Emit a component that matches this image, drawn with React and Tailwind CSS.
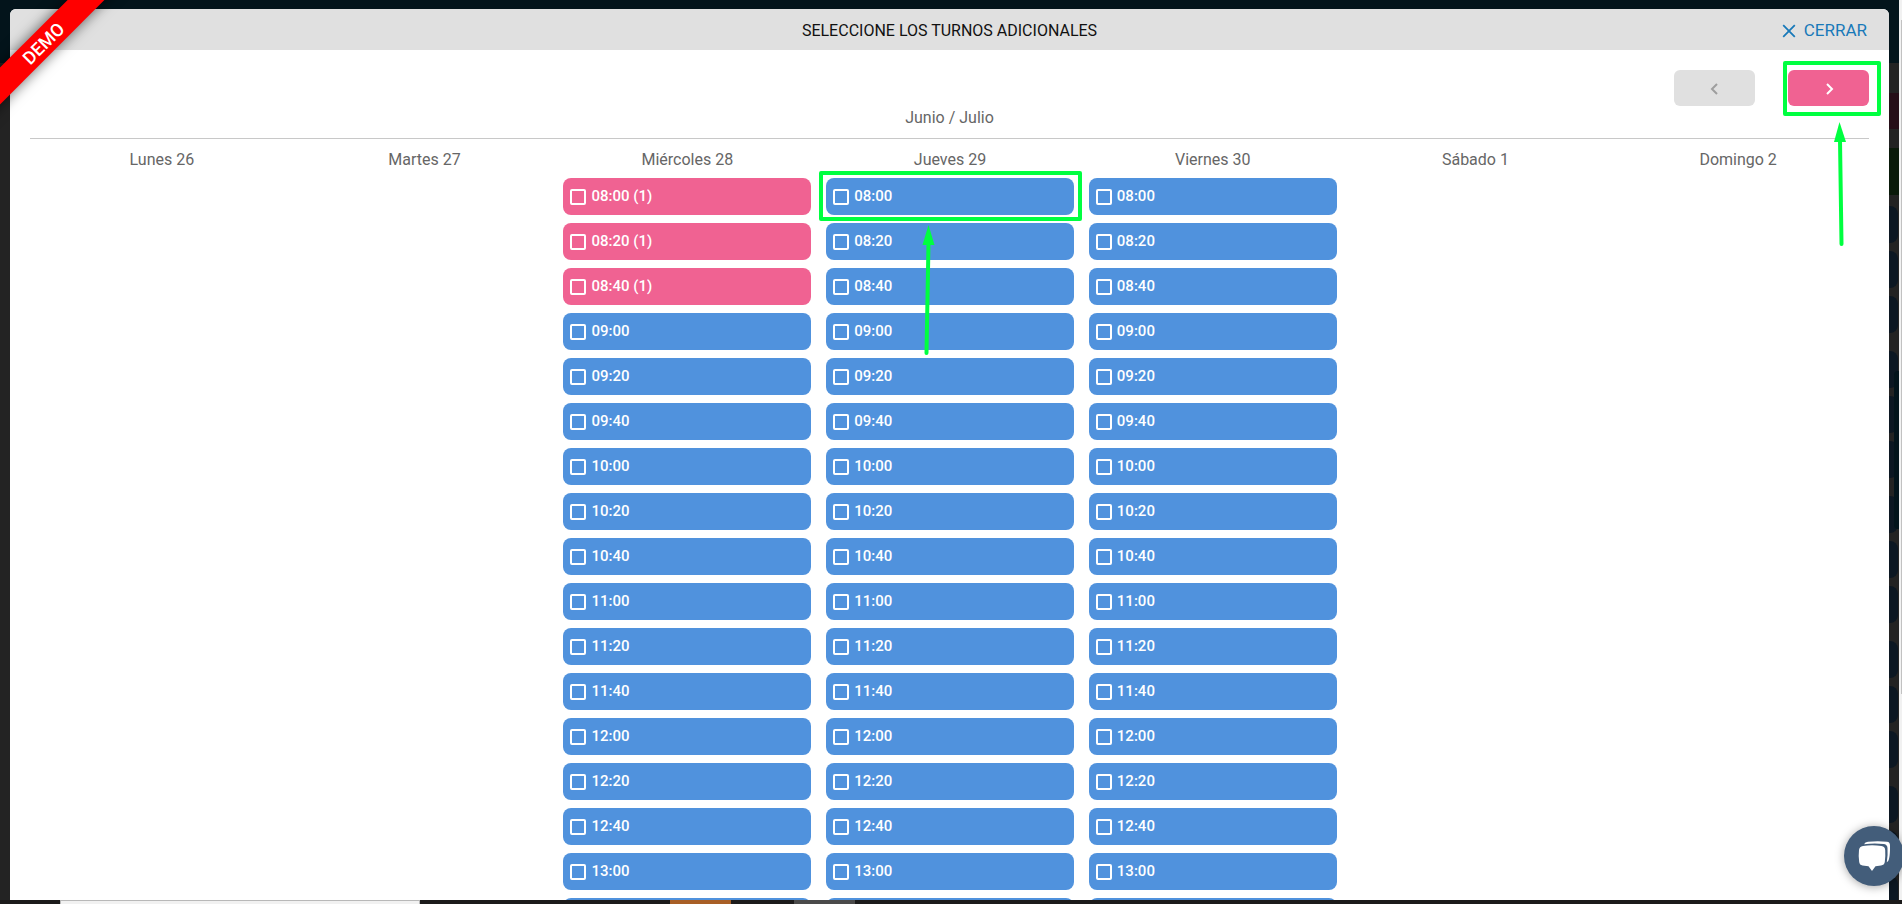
import React, { useState } from "react";

const TIMES = [
  "08:00", "08:20", "08:40", "09:00", "09:20", "09:40", "10:00", "10:20", "10:40",
  "11:00", "11:20", "11:40", "12:00", "12:20", "12:40", "13:00", "13:20",
];

const DAYS = [
  { id: "lun", label: "Lunes 26", slots: [] },
  { id: "mar", label: "Martes 27", slots: [] },
  { id: "mie", label: "Miércoles 28", slots: TIMES, booked: { "08:00": 1, "08:20": 1, "08:40": 1 } },
  { id: "jue", label: "Jueves 29", slots: TIMES, marked: "08:00" },
  { id: "vie", label: "Viernes 30", slots: TIMES },
  { id: "sab", label: "Sábado 1", slots: [] },
  { id: "dom", label: "Domingo 2", slots: [] },
];

export default function App() {
  const [selected, setSelected] = useState({});

  const toggle = (key) => setSelected((s) => ({ ...s, [key]: !s[key] }));

  return (
    <div className="relative flex h-screen flex-col overflow-hidden bg-[#232323] font-[Roboto,sans-serif]">
      <div className="relative flex min-h-0 flex-1 pt-[9px] pr-[13px] pl-[10px]">
        <Backdrop />
        <div
          role="dialog"
          aria-labelledby="dialog-title"
          className="relative flex min-w-0 flex-1 flex-col overflow-hidden rounded-t-md bg-white"
        >
          <header className="grid h-[41px] shrink-0 grid-cols-[1fr_auto_1fr] items-center bg-[#e0e0e0] px-[22px] pt-[2px]">
            <h1 id="dialog-title" className="col-start-2 text-base text-[#111]">
              SELECCIONE LOS TURNOS ADICIONALES
            </h1>
            <button type="button" className="flex items-center gap-2 justify-self-end text-[17px] text-[#1879b9]">
              <svg viewBox="0 0 14 14" className="size-[14px]" fill="none" stroke="currentColor" strokeWidth="1.8">
                <path d="M1.2 1.2l11.6 11.6M12.8 1.2L1.2 12.8" />
              </svg>
              CERRAR
            </button>
          </header>

          <div className="flex min-h-0 flex-1 flex-col px-5 pt-5">
            <div className="flex shrink-0 justify-end gap-[33px]">
              <button
                type="button"
                disabled
                aria-label="Semana anterior"
                className="flex h-9 w-[81px] items-center justify-center rounded-md bg-[#e0e0e0] text-[#9e9e9e]"
              >
                <Chevron d="M8 1L3 6l5 5" />
              </button>
              <div className="relative">
                <button
                  type="button"
                  aria-label="Semana siguiente"
                  className="flex h-9 w-[81px] items-center justify-center rounded-md bg-[#f06292] text-white"
                >
                  <Chevron d="M4 1l5 5-5 5" />
                </button>
                <div className="pointer-events-none absolute -top-[9px] -right-[12px] -bottom-[10px] -left-[5px] z-10 rounded-xs border-4 border-[#00ff40]" />
                <svg
                  className="pointer-events-none absolute top-[52px] left-[46px] z-10 h-[126px] w-[14px]"
                  viewBox="0 0 14 126"
                >
                  <path d="M6 18L7.500 122" stroke="#00ff40" strokeWidth="4" strokeLinecap="round" />
                  <path d="M5.500 0L12 20H0z" fill="#00ff40" />
                </svg>
              </div>
            </div>

            <h2 className="shrink-0 border-b border-[#c8c8c8] pb-2 text-center text-base leading-6 text-[#666]">
              Junio / Julio
            </h2>

            <div className="grid min-h-0 flex-1 grid-cols-7 pt-[9px]">
              {DAYS.map((day) => (
                <DayColumn key={day.id} day={day} selected={selected} onToggle={toggle} />
              ))}
            </div>
          </div>
        </div>
      </div>

      <Taskbar />

      <div className="absolute top-[30px] -left-[57px] z-20 flex h-[26px] w-[200px] -rotate-45 items-center justify-center bg-[#ff0000] text-[18px] font-medium text-white shadow-[0_0_14px_rgba(0,0,0,0.6)]">
        DEMO
      </div>
      <ChatButton />
    </div>
  );
}

function DayColumn({ day, selected, onToggle }) {
  return (
    <section className="min-w-0 pr-[7px] pl-2">
      <h3 className="text-center text-base leading-6 text-[#666]">{day.label}</h3>
      <div className="mt-[6px] flex flex-col gap-2">
        {day.slots.map((time) => {
          const key = day.id + time;
          const count = day.booked?.[time];
          return (
            <div key={key} className="relative">
              <label
                className={
                  "flex h-[37px] items-center gap-[5px] rounded-lg px-[7px] text-[15px] font-medium text-white " +
                  (count ? "bg-[#f06292]" : "bg-[#5092dd]")
                }
              >
                <input
                  type="checkbox"
                  className="size-4 appearance-none rounded-xs border-2 border-white checked:bg-white"
                  checked={!!selected[key]}
                  onChange={() => onToggle(key)}
                />
                <span>{count ? `${time} (${count})` : time}</span>
              </label>
              {day.marked === time && <SlotMark />}
            </div>
          );
        })}
      </div>
    </section>
  );
}

// green frame with an arrow pointing at the slot from below
function SlotMark() {
  return (
    <>
      <div className="pointer-events-none absolute -top-[7px] -right-[8px] -bottom-[6px] -left-[7px] z-10 rounded-xs border-4 border-[#00ff40]" />
      <svg className="pointer-events-none absolute top-[47px] left-[96px] z-10 h-[132px] w-[14px]" viewBox="0 0 14 132">
        <path d="M6.500 18L4.500 128" stroke="#00ff40" strokeWidth="4" strokeLinecap="round" />
        <path d="M6.500 0L12.500 20H.5z" fill="#00ff40" />
      </svg>
    </>
  );
}

function Chevron({ d }) {
  return (
    <svg viewBox="0 0 12 12" className="mt-[2px] size-3" fill="none" stroke="currentColor" strokeWidth="2">
      <path d={d} />
    </svg>
  );
}

// dimmed agenda behind the dialog
function Backdrop() {
  return (
    <div aria-hidden="true" className="absolute inset-0 flex overflow-hidden">
      <div className="relative min-w-0 flex-1">
        <div className="h-[63px] bg-[#03141b]" />
        <div className="mt-[30px] h-9 bg-[#260f18]" />
        <div className="mt-[19px] h-[47px] bg-[#0a1a0a]" />
        <div className="mt-[11px] flex flex-col gap-[18px] pr-px">
          {[0, 1, 2, 3, 4].map((g) => (
            <div key={g} className="flex flex-col gap-2">
              <div className="h-[37px] rounded-lg bg-[#0c1722]" />
              <div className="h-[37px] rounded-lg bg-[#0c1722]" />
              <div className="h-[37px] rounded-lg bg-[#0c1722]" />
            </div>
          ))}
        </div>
        <div className="absolute top-[371px] right-0 h-[158px] w-[5px] rounded-l bg-[#03141b]" />
        {/* left margin stays plain below the top band */}
        <div className="absolute top-[63px] bottom-0 left-0 w-[10px] bg-[#232323]" />
      </div>
      <div className="w-[3px] bg-[#f1f1f1] pt-5 pl-[2px]">
        <div className="h-[674px] bg-[#c1c1c1]" />
      </div>
    </div>
  );
}

function Taskbar() {
  return (
    <div className="relative flex h-1 shrink-0 bg-[#1c1b1b]">
      <div className="ml-[60px] w-[360px] border-x border-t border-[#b8b8b8] bg-[#f1f1f1]" />
      <div className="ml-[250px] w-[61px] bg-[#a85f26]" />
      <div className="ml-[63px] w-[61px] bg-[#4a4a4a]" />
    </div>
  );
}

function ChatButton() {
  return (
    <button
      type="button"
      aria-label="Abrir chat"
      className="absolute -right-[2px] bottom-[18px] z-20 size-[60px] rounded-full bg-[#435d7a] shadow-[0_1px_10px_rgba(0,0,0,0.35)]"
    >
      <svg viewBox="0 0 60 60" className="size-[60px]" fill="#fff">
        <path d="M20 18.200Q21 15.800 24 15.700Q34 14.600 43 15.700Q46 16 46 19.500Q46.200 28 45 33Q44.500 35.500 42.800 36.200Q44 28 43.500 22Q43.200 18.300 39.500 18Q30 17 20 18.200Z" />
        <path d="M19 20Q28 18.600 37.500 20Q41 20.400 41.200 24Q41.600 30 40.800 36Q40.400 39 37 39.500L31.500 40.200L28 45L24.500 40.200L18.500 39.500Q15.600 39 15.200 36Q14.300 30 15 24Q15.400 20.500 19 20Z" />
      </svg>
    </button>
  );
}
